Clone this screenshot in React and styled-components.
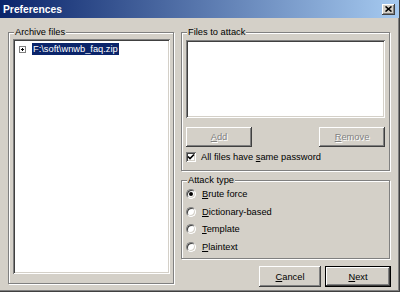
import React, { useState } from 'react';
import styled, { createGlobalStyle } from 'styled-components';

const Global = createGlobalStyle`
    html, body {
        margin: 0;
        padding: 0;
        background: #d4d0c8;
    }
    body {
        font-family: "Liberation Sans", Arial, sans-serif;
        font-size: 9.3px;
        color: #000;
    }
`;

const Window = styled.div`
    width: 400px;
    height: 292px;
    box-sizing: border-box;
    display: flex;
    flex-direction: column;
    background: #d4d0c8;
    border-right: 1px solid #404040;
    border-bottom: 1px solid #404040;
    box-shadow: inset -1px -1px 0 #808080;
`;

const TitleBar = styled.div`
    height: 18px;
    display: flex;
    align-items: center;
    justify-content: space-between;
    padding: 0 4px 0 3px;
    background: linear-gradient(to right, #0a246a, #a6caf0);
`;

const Title = styled.span`
    color: #fff;
    font-weight: bold;
    font-size: 10.3px;
`;

const CloseBtn = styled.div`
    width: 13px;
    height: 11px;
    display: flex;
    align-items: center;
    justify-content: center;
    background: #d4d0c8;
    box-shadow: inset -1px -1px #404040, inset 1px 1px #fff, inset -2px -2px #808080;
`;

const Body = styled.div`
    flex: 1;
    display: grid;
    grid-template-columns: 166px 209px;
    column-gap: 7px;
    padding: 14px 0 0 8px;
    align-items: start;
`;

const Group = styled.div`
    position: relative;
    box-sizing: border-box;
    height: ${p => p.$h}px;
    border: 1px solid #808080;
    box-shadow: inset 1px 1px 0 #fff, 1px 1px 0 #fff;
    padding: ${p => p.$pad};
    display: flex;
    flex-direction: column;
`;

const Legend = styled.span`
    position: absolute;
    top: -7px;
    left: 5px;
    padding: 0 1px;
    background: #d4d0c8;
    line-height: 12px;
`;

const Sunken = styled.div`
    background: #fff;
    box-shadow: inset 1px 1px #808080, inset -1px -1px #fff, inset 2px 2px #404040, inset -2px -2px #d4d0c8;
`;

const Tree = styled(Sunken)`
    flex: 1;
    padding: 4px 0 0 6px;
`;

const TreeItem = styled.div`
    display: flex;
    align-items: center;
    gap: 6px;
`;

const Expander = styled.div`
    width: 7px;
    height: 7px;
    box-sizing: border-box;
    border: 1px solid #808080;
    background: #fff;
    position: relative;
    &::before {
        content: '';
        position: absolute;
        left: 1px;
        top: 2px;
        width: 3px;
        height: 1px;
        background: #000;
    }
    &::after {
        content: '';
        position: absolute;
        left: 2px;
        top: 1px;
        width: 1px;
        height: 3px;
        background: #000;
    }
`;

const Selected = styled.span`
    background: #0a246a;
    color: #fff;
    padding: 0 1px;
    line-height: 12px;
`;

const RightCol = styled.div`
    display: flex;
    flex-direction: column;
`;

const FileList = styled(Sunken)`
    height: 78px;
`;

const ButtonRow = styled.div`
    display: flex;
    justify-content: ${p => p.$justify || 'space-between'};
    gap: 4px;
    margin-top: ${p => p.$mt}px;
    margin-right: ${p => p.$mr || 0}px;
`;

const Button = styled.div`
    box-sizing: border-box;
    width: ${p => p.$w}px;
    height: ${p => p.$hgt || 20}px;
    display: flex;
    align-items: center;
    justify-content: center;
    background: #d4d0c8;
    color: ${p => (p.$disabled ? '#808080' : '#000')};
    text-shadow: ${p => (p.$disabled ? '1px 1px 0 #fff' : 'none')};
    border: ${p => (p.$default ? '1px solid #000' : 'none')};
    box-shadow: inset -1px -1px #404040, inset 1px 1px #fff, inset -2px -2px #808080, inset 2px 2px #d4d0c8;
`;

const CheckRow = styled.label`
    display: flex;
    align-items: center;
    gap: 5px;
    margin-top: 4px;
    height: 11px;
`;

const CheckBox = styled.div`
    width: 10px;
    height: 10px;
    box-sizing: border-box;
    background: #fff;
    box-shadow: inset 1px 1px #808080, inset -1px -1px #fff, inset 2px 2px #404040, inset -2px -2px #d4d0c8;
    display: flex;
    align-items: center;
    justify-content: center;
`;

const RadioRow = styled.div`
    display: flex;
    align-items: center;
    gap: 6px;
    height: 17.7px;
`;

const Radio = styled.div`
    width: 10px;
    height: 10px;
    box-sizing: border-box;
    border-radius: 50%;
    border: 1px solid;
    border-color: #808080 #fff #fff #808080;
    box-shadow: inset 1px 1px 0 #404040, inset -1px -1px 0 #d4d0c8;
    background: #fff;
    display: flex;
    align-items: center;
    justify-content: center;
    &::after {
        content: '';
        width: 4px;
        height: 4px;
        border-radius: 50%;
        background: ${p => (p.$on ? '#000' : 'transparent')};
    }
`;

const attackTypes = [
    { key: 'brute', acc: 'B', rest: 'rute force' },
    { key: 'dict', acc: 'D', rest: 'ictionary-based' },
    { key: 'tpl', acc: 'T', rest: 'emplate' },
    { key: 'plain', acc: 'P', rest: 'laintext' },
];

function App() {
    const [attack, setAttack] = useState('brute');

    return (
        <Window>
            <Global />
            <TitleBar>
                <Title>Preferences</Title>
                <CloseBtn>
                    <svg width="7" height="6" viewBox="0 0 7 6">
                        <path d="M0.5 0.5 L6.5 5.5 M6.5 0.5 L0.5 5.5" stroke="#000" strokeWidth="1.6" />
                    </svg>
                </CloseBtn>
            </TitleBar>
            <Body>
                <Group $h={252} $pad="6px 3px 9px 4px">
                    <Legend>Archive files</Legend>
                    <Tree>
                        <TreeItem>
                            <Expander />
                            <Selected>F:\soft\wnwb_faq.zip</Selected>
                        </TreeItem>
                    </Tree>
                </Group>
                <RightCol>
                    <Group $h={139} $pad="7px 4px 0 4px">
                        <Legend>Files to attack</Legend>
                        <FileList />
                        <ButtonRow $mt={9}>
                            <Button $w={66} $disabled><u>A</u>dd</Button>
                            <Button $w={66} $disabled><u>R</u>emove</Button>
                        </ButtonRow>
                        <CheckRow>
                            <CheckBox>
                                <svg width="8" height="8" viewBox="0 0 8 8">
                                    <path d="M1 3.5 L3 5.5 L7 1.5" stroke="#000" strokeWidth="1.6" fill="none" />
                                </svg>
                            </CheckBox>
                            <span>All files have <u>s</u>ame password</span>
                        </CheckRow>
                    </Group>
                    <Group $h={79} $pad="4px 4px 0 4px" style={{ marginTop: 9 }}>
                        <Legend>Attack type</Legend>
                        {attackTypes.map(t => (
                            <RadioRow key={t.key} onClick={() => setAttack(t.key)}>
                                <Radio $on={attack === t.key} />
                                <span><u>{t.acc}</u>{t.rest}</span>
                            </RadioRow>
                        ))}
                    </Group>
                    <ButtonRow $justify="flex-end" $mt={7} $mr={-1}>
                        <Button $w={62} $hgt={21}><u>C</u>ancel</Button>
                        <Button $w={66} $hgt={21} $default><u>N</u>ext</Button>
                    </ButtonRow>
                </RightCol>
            </Body>
        </Window>
    );
}

export default App;
